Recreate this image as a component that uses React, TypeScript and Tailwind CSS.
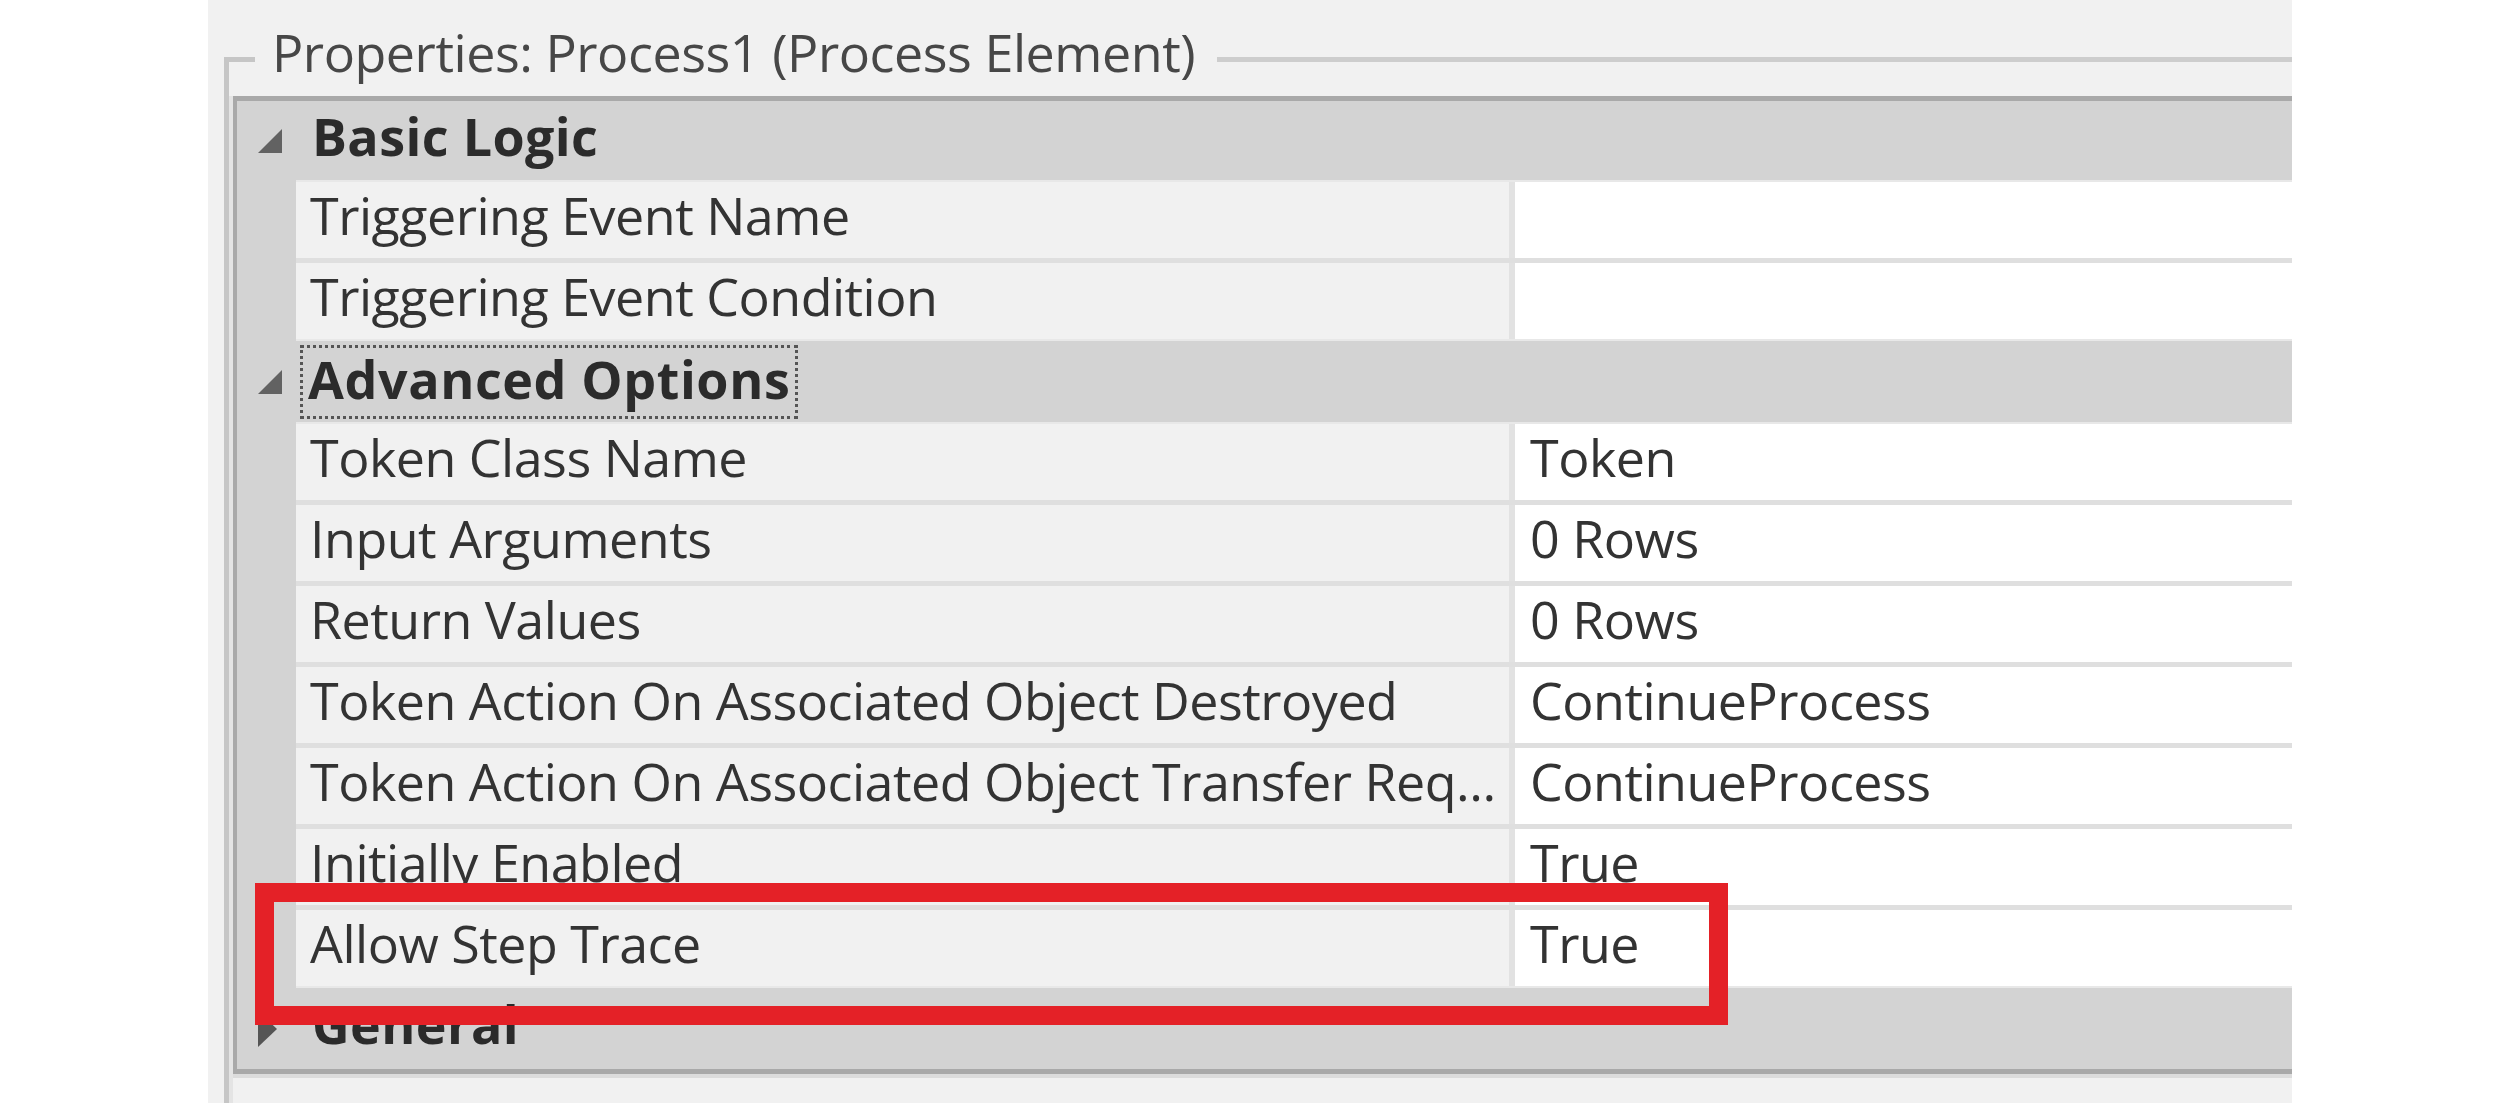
import { FC } from 'react'

const font = { fontFamily: '"Open Sans", "Noto Sans", sans-serif' }

const Expanded: FC = () => (
  <svg width="24" height="24" viewBox="0 0 24 24">
    <polygon points="24,0 24,24 0,24" fill="#626262" />
  </svg>
)

const Collapsed: FC = () => (
  <svg width="19" height="36" viewBox="0 0 19 36">
    <polygon points="0,0 19,18 0,36" fill="#555555" />
  </svg>
)

type CategoryProps = { title: string; open?: boolean; focused?: boolean; h: string }

const Category: FC<CategoryProps> = ({ title, open = true, focused = false, h }) => (
  <div className={`flex items-center bg-[#d3d3d3] ${h}`}>
    <div className="w-[59px] shrink-0 flex items-center pl-[21px]">
      {open ? <Expanded /> : <Collapsed />}
    </div>
    {focused ? (
      <div className="ml-[4px] border-[3px] border-dotted border-[#555] px-[5px] h-[74px] flex items-center pb-[6px]">
        <span className="font-bold text-[52px] text-[#2b2b2b] leading-none tracking-[0.6px]">{title}</span>
      </div>
    ) : (
      <span className="pl-[16px] pb-[9px] font-bold text-[52px] text-[#2b2b2b] leading-none tracking-[0.4px]">{title}</span>
    )}
  </div>
)

type RowProps = { label: string; value?: string; topBand?: boolean; lastBeforeCategory?: boolean }

const Row: FC<RowProps> = ({ label, value = '', topBand = false, lastBeforeCategory = false }) => (
  <div className="flex">
    <div className="w-[59px] shrink-0 bg-[#d3d3d3]" />
    <div className="flex-1 flex flex-col">
      {topBand && <div className="h-[2px] bg-[#e8e8e8]" />}
      <div className="h-[76px] flex text-[52px] text-[#333] leading-none tracking-[-0.5px]">
        <div className="w-[1213px] shrink-0 bg-[#f1f1f1] flex items-center pl-[14px] pb-[11px] whitespace-nowrap">
          {label}
        </div>
        <div className="w-[6px] shrink-0 bg-[#e2e2e2]" />
        <div className="flex-1 bg-white flex items-center pl-[15px] pb-[11px] whitespace-nowrap">{value}</div>
      </div>
      {lastBeforeCategory ? (
        <div className="h-[2px] bg-[#e8e8e8]" />
      ) : (
        <div className="h-[5px] bg-[#dfdfdf]" />
      )}
    </div>
  </div>
)

export default function App() {
  return (
    <div className="relative w-[2501px] h-[1103px] bg-white flex overflow-hidden" style={font}>
      <div className="w-[208px] shrink-0" />
      <div className="w-[2084px] shrink-0 bg-[#f1f1f1] flex flex-col pl-[16px]">
        <div className="h-[96px] shrink-0 flex">
          <div className="w-[31px] shrink-0 mt-[57px] border-l-[5px] border-t-[5px] border-[#c6c6c6]" />
          <div className="pl-[17px] pr-[22px] mt-[26px] self-start text-[52px] leading-[52px] tracking-[-0.45px] text-[#474747] whitespace-nowrap">
            Properties: Process1 (Process Element)
          </div>
          <div className="flex-1 mt-[57px] h-[5px] bg-[#cdcdcd]" />
        </div>
        <div className="flex-1 flex">
          <div className="w-[5px] shrink-0 bg-[#c6c6c6]" />
          <div className="w-[4px] shrink-0 bg-[#e4e4e4]" />
          <div className="flex-1 flex flex-col">
            <div className="border-l-[4px] border-t-[5px] border-b-[5px] border-[#a9a9a9] flex flex-col">
              <Category title="Basic Logic" h="h-[79px]" />
              <Row label="Triggering Event Name" topBand />
              <Row label="Triggering Event Condition" lastBeforeCategory />
              <Category title="Advanced Options" focused h="h-[81px]" />
              <Row label="Token Class Name" value="Token" topBand />
              <Row label="Input Arguments" value="0 Rows" />
              <Row label="Return Values" value="0 Rows" />
              <Row label="Token Action On Associated Object Destroyed" value="ContinueProcess" />
              <Row label="Token Action On Associated Object Transfer Req..." value="ContinueProcess" />
              <Row label="Initially Enabled" value="True" />
              <Row label="Allow Step Trace" value="True" lastBeforeCategory />
              <Category title="General" open={false} h="h-[81px]" />
            </div>
            <div className="h-[4px] bg-[#dcdcdc]" />
          </div>
        </div>
      </div>
      <div className="flex-1" />
      <div className="absolute left-[255px] top-[883px] w-[1473px] h-[142px] border-[19px] border-[#e42127]" />
    </div>
  )
}
